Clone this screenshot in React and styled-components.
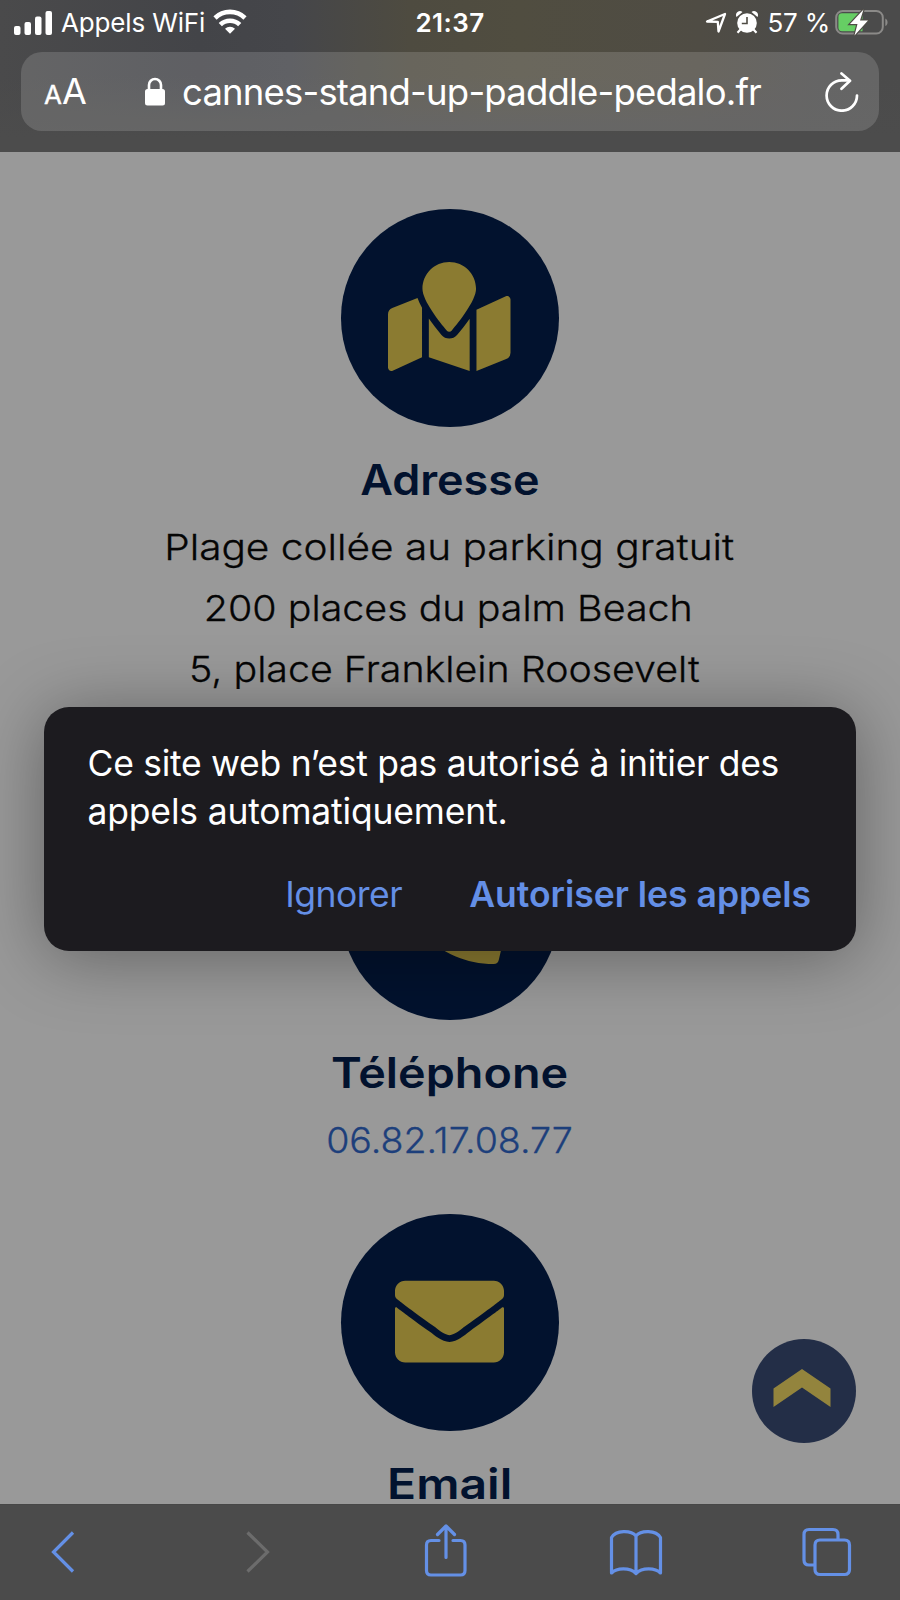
import React from "react";
import styled, { createGlobalStyle } from "styled-components";
import { FaMapMarked, FaPhoneAlt, FaEnvelope } from "react-icons/fa";

const Global = createGlobalStyle`
  *, *::before, *::after { box-sizing: border-box; }
  body { margin: 0; background: #999; }
`;

const Screen = styled.div`
  position: relative;
  width: 900px;
  height: 1600px;
  overflow: hidden;
  display: flex;
  flex-direction: column;
  background: #999999;
  font-family: Inter, "Liberation Sans", sans-serif;
`;

/* Single-line text with adjustable glyph width and tracking. */
const Fit = styled.span`
  display: inline-block;
  white-space: nowrap;
  letter-spacing: ${(p) => p.$track || 0}px;
  transform: scaleX(${(p) => p.$x || 1});
`;

const Header = styled.header`
  flex: 0 0 152px;
  background:
    linear-gradient(180deg, rgba(76, 76, 76, 0) 50%, #4c4c4c 90%),
    linear-gradient(90deg, #4a4a4b 0, #434448 200px, #45464a 290px, #4e4b40 410px, #504d40 520px, #4f4c44 700px, #4b4b4b 830px);
`;

const StatusBar = styled.div`
  display: flex;
  align-items: center;
  height: 52px;
  padding: 0 11px 7px 14px;
  color: #fff;
  font-size: 26px;
`;

const StatusSide = styled.div`
  flex: 1 1 0;
  display: flex;
  align-items: center;
  gap: ${(p) => p.$gap}px;
  justify-content: ${(p) => (p.$end ? "flex-end" : "flex-start")};
`;

const Clock = styled.div`
  padding-right: 3px;
  font-weight: 600;
  font-size: 26px;
  letter-spacing: 0.4px;
`;

const AddressBar = styled.div`
  display: flex;
  align-items: center;
  height: 79px;
  margin: 0 21px;
  padding-right: 20px;
  border-radius: 21px;
  background: rgba(255, 255, 255, 0.15);
  color: #fff;
`;

const TextSize = styled.div`
  flex: none;
  width: 96px;
  padding: 3px 0 0 23px;
  font-size: 36px;
  line-height: 40px;
  letter-spacing: -0.4px;
  white-space: nowrap;
  small { font-size: 26px; letter-spacing: 0; -webkit-text-stroke: 0.4px #fff; }
`;

const Url = styled.div`
  flex: 1;
  min-width: 0;
  display: flex;
  align-items: center;
  padding-left: 28px;
  gap: 17px;
  font-size: 36.5px;
`;

const Page = styled.main`
  flex: 1;
  display: flex;
  flex-direction: column;
  align-items: center;
  gap: 43px;
  padding-top: 57px;
  min-height: 0;
  overflow: hidden;
`;

const Contact = styled.section`
  flex: none;
  display: flex;
  flex-direction: column;
  align-items: center;
  padding-bottom: ${(p) => p.$extra || 0}px;
`;

const Disc = styled.div`
  width: 217.5px;
  height: 217.5px;
  border-radius: 50%;
  display: flex;
  align-items: center;
  justify-content: center;
  background: #02122e;
  color: #8b7b31;
  svg {
    width: ${(p) => p.$w}px;
    height: 109px;
    margin: 0 ${(p) => p.$nudge || 0}px 2px 0;
  }
`;

const Title = styled.h2`
  margin: 27px 0 11px;
  font-size: 42px;
  line-height: 52px;
  font-weight: 600;
  color: #02122e;
`;

const Line = styled.div`
  height: 61px;
  font-size: 35.2px;
  line-height: 61px;
  font-weight: 300;
  color: ${(p) => (p.$link ? "#1d3f7b" : "#050505")};
  -webkit-text-stroke: 0.3px currentColor;
  padding-right: ${(p) => p.$trail || 0}px;
  white-space: nowrap;
`;

const Dialog = styled.div`
  position: absolute;
  left: 44px;
  top: 706.5px;
  width: 812px;
  height: 244px;
  padding: 33.5px 45px 0 43.5px;
  border-radius: 25px;
  background: #1c1b1f;
  box-shadow: 0 6px 70px rgba(0, 0, 0, 0.36);
  display: flex;
  flex-direction: column;
`;

const Message = styled.p`
  display: flex;
  flex-direction: column;
  align-items: flex-start;
  margin: 0;
  color: #fff;
  font-size: 35.5px;
  line-height: 48px;
`;

const Actions = styled.div`
  display: flex;
  justify-content: flex-end;
  gap: 67px;
  margin-top: 35px;
`;

const Action = styled.button`
  border: 0;
  padding: 0;
  background: none;
  font: ${(p) => (p.$strong ? 600 : 400)} 35.5px/48px Inter, sans-serif;
  letter-spacing: ${(p) => (p.$strong ? 0 : -0.5)}px;
  color: #648fe6;
`;

const ToTop = styled.button`
  position: absolute;
  right: 44px;
  bottom: 157px;
  width: 104px;
  height: 104px;
  padding: 0 4px 6px 0;
  border: 0;
  border-radius: 50%;
  background: #232e47;
  display: flex;
  align-items: center;
  justify-content: center;
`;

const Toolbar = styled.nav`
  flex: 0 0 96px;
  display: grid;
  grid-template-columns: 196px 188px 190.5px 190.5px 54px;
  padding: 15px 0 0 34.5px;
  background: #4b4b4b;
  border-top: 1px solid #474747;
`;

const Tool = styled.button`
  width: 54px;
  height: 60px;
  padding: 0;
  border: 0;
  background: none;
  color: ${(p) => (p.$off ? "#6c6c6c" : "#6490e6")};
  svg {
    display: block;
    fill: none;
    stroke: currentColor;
    stroke-width: 3.2;
    stroke-linecap: ${(p) => (p.$round ? "round" : "butt")};
    stroke-linejoin: ${(p) => (p.$round ? "round" : "miter")};
  }
`;

const ToolIcon = ({ d }) => (
  <svg width="54" height="60" viewBox="0 0 54 60"><path d={d} /></svg>
);

const tools = [
  { name: "Précédent", d: "M38 12.500L18.500 32 38 51.500" },
  { name: "Suivant", off: true, d: "M16.500 12.500L36.500 32 16.500 51.500" },
  {
    name: "Partager",
    round: true,
    d: "M20 20.500H12Q7.500 20.500 7.500 25V50.500Q7.500 55 12 55H41.500Q46 55 46 50.500V25Q46 20.500 41.500 20.500H34M27 37.500V6M18.500 14.500L27 6l8.500 8.500",
  },
  {
    name: "Signets",
    round: true,
    d: "M27 16C22 10 7 10 2.500 17.500V53C8 47.500 21 47.500 27 53.500M27 16C32 10 47 10 51.500 17.500V53C46 47.500 33 47.500 27 53.500V16",
  },
  {
    name: "Onglets",
    round: true,
    d: "M14 45H9Q4 45 4 40V14.500Q4 9.500 9 9.500H33Q38 9.500 38 14.500V20M20 20H44.500Q49.500 20 49.500 25V49.500Q49.500 54.500 44.500 54.500H20Q15 54.500 15 49.500V25Q15 20 20 20z",
  },
];

const Signal = () => (
  <svg width="38" height="24" viewBox="0 0 38 24" fill="#fff">
    <rect x="0" y="15" width="6.500" height="9" rx="2" />
    <rect x="10.500" y="11" width="6.500" height="13" rx="2" />
    <rect x="21" y="5.500" width="6.500" height="18.500" rx="2" />
    <rect x="31.500" y="0" width="6.500" height="24" rx="2" />
  </svg>
);

const WifiIcon = styled.svg`
  margin: 0 0 2px -1px;
`;

const Wifi = () => (
  <WifiIcon width="34" height="25" viewBox="0 0 34 25" fill="none" stroke="#fff" strokeWidth="4.600">
    <path d="M2 9a21.500 21.500 0 0 1 30 0" />
    <path d="M7.300 15.700a14 14 0 0 1 19.400 0" />
    <path d="M17 24.800l-5-5a7.300 7.300 0 0 1 10 0z" fill="#fff" stroke="none" />
  </WifiIcon>
);

const Locate = () => (
  <svg width="22" height="22" viewBox="0 0 22 22" fill="none" stroke="#fff" strokeWidth="2.300" strokeLinejoin="round">
    <path d="M2 9.500L20 2 13.500 19.500 12.800 9.800z" />
  </svg>
);

const Alarm = () => (
  <svg width="22" height="23" viewBox="0 0 22 23">
    <g fill="#fff">
      <circle cx="11" cy="12" r="9.800" />
      <path d="M.500 6A4 4 0 0 1 6.500 1zM21.500 6a4 4 0 0 0-6-5z" />
    </g>
    <path d="M4.500 18.500l-3 3.300M17.500 18.500l3 3.300" stroke="#fff" strokeWidth="2.200" />
    <path d="M11 6v6.500H5.800" fill="none" stroke="#4f4c44" strokeWidth="1.600" />
  </svg>
);

const BatteryIcon = styled.svg`
  margin: 0 0 1px -4px;
`;

const Battery = () => (
  <BatteryIcon width="54" height="28" viewBox="0 0 54 28">
    <rect x="1.200" y="3" width="46.600" height="22.500" rx="6.500" fill="none" stroke="#8b8a88" strokeWidth="2" />
    <path d="M50.300 10.500c3 1.400 3 6.200 0 7.600z" fill="#8b8a88" />
    <path d="M7 5.200h20.500v18H7a3.600 3.600 0 0 1-3.600-3.600V8.800A3.600 3.600 0 0 1 7 5.200z" fill="#66ce64" />
    <path d="M28.500 1.500L15 16h7.500L19.500 27.500 33 12.500h-8z" fill="#fff" stroke="#4f4c47" strokeWidth="2.400" paintOrder="stroke" />
  </BatteryIcon>
);

const Lock = () => (
  <svg width="20" height="29" viewBox="0 0 20 29">
    <rect x="0" y="12" width="20" height="16.500" rx="2.500" fill="#fff" />
    <path d="M4 13V8a6 6 0 0 1 12 0v5" fill="none" stroke="#fff" strokeWidth="2.600" />
  </svg>
);

const Reload = () => (
  <svg width="34" height="40" viewBox="0 0 34 40" fill="none" stroke="#fff" strokeWidth="2.700" strokeLinecap="round" strokeLinejoin="round">
    <path d="M32 23.500A15.200 15.200 0 1 1 16.800 8.300H24" />
    <path d="M16.500 1.500l8.500 7.300-8.500 8" />
  </svg>
);

export default function App() {
  return (
    <Screen>
      <Global />
      <Header>
        <StatusBar>
          <StatusSide $gap={9}>
            <Signal />
            <Fit $track={-0.15}>Appels WiFi</Fit>
            <Wifi />
          </StatusSide>
          <Clock>21:37</Clock>
          <StatusSide $end $gap={9}>
            <Locate />
            <Alarm />
            <Fit $track={-0.2}>57 %</Fit>
            <Battery />
          </StatusSide>
        </StatusBar>
        <AddressBar>
          <TextSize><small>A</small>A</TextSize>
          <Url>
            <Lock />
            <Fit $track={-0.82}>cannes-stand-up-paddle-pedalo.fr</Fit>
          </Url>
          <Reload />
        </AddressBar>
      </Header>

      <Page>
        <Contact $extra={59.5}>
          <Disc $w={122.5} $nudge={1}><FaMapMarked /></Disc>
          <Title><Fit $x={1.07}>Adresse</Fit></Title>
          <Line $trail={1}><Fit $x={1.153}>Plage collée au parking gratuit</Fit></Line>
          <Line $trail={3}><Fit $x={1.12}>200 places du palm Beach</Fit></Line>
          <Line $trail={12}><Fit $x={1.118}>5, place Franklein Roosevelt</Fit></Line>
        </Contact>
        <Contact>
          <Disc $w={109}><FaPhoneAlt /></Disc>
          <Title><Fit $x={1.112}>Téléphone</Fit></Title>
          <Line $link $trail={2}><Fit $x={1.068}>06.82.17.08.77</Fit></Line>
        </Contact>
        <Contact>
          <Disc $w={109} $nudge={0.5}><FaEnvelope /></Disc>
          <Title><Fit $x={1.145}>Email</Fit></Title>
        </Contact>
      </Page>

      <Toolbar>
        {tools.map((t) => (
          <Tool key={t.name} aria-label={t.name} $off={t.off} $round={t.round}>
            <ToolIcon d={t.d} />
          </Tool>
        ))}
      </Toolbar>

      <ToTop aria-label="Haut de page">
        <svg width="58" height="38" viewBox="0 0 58 38">
          <path d="M29 0l28.500 19.500V38L29 18.500.5 38V19.500z" fill="#93843d" />
        </svg>
      </ToTop>

      <Dialog role="dialog">
        <Message>
          <Fit $track={-0.3}>Ce site web n’est pas autorisé à initier des</Fit>
          <Fit $track={-0.18}>appels automatiquement.</Fit>
        </Message>
        <Actions>
          <Action>Ignorer</Action>
          <Action $strong>Autoriser les appels</Action>
        </Actions>
      </Dialog>
    </Screen>
  );
}
